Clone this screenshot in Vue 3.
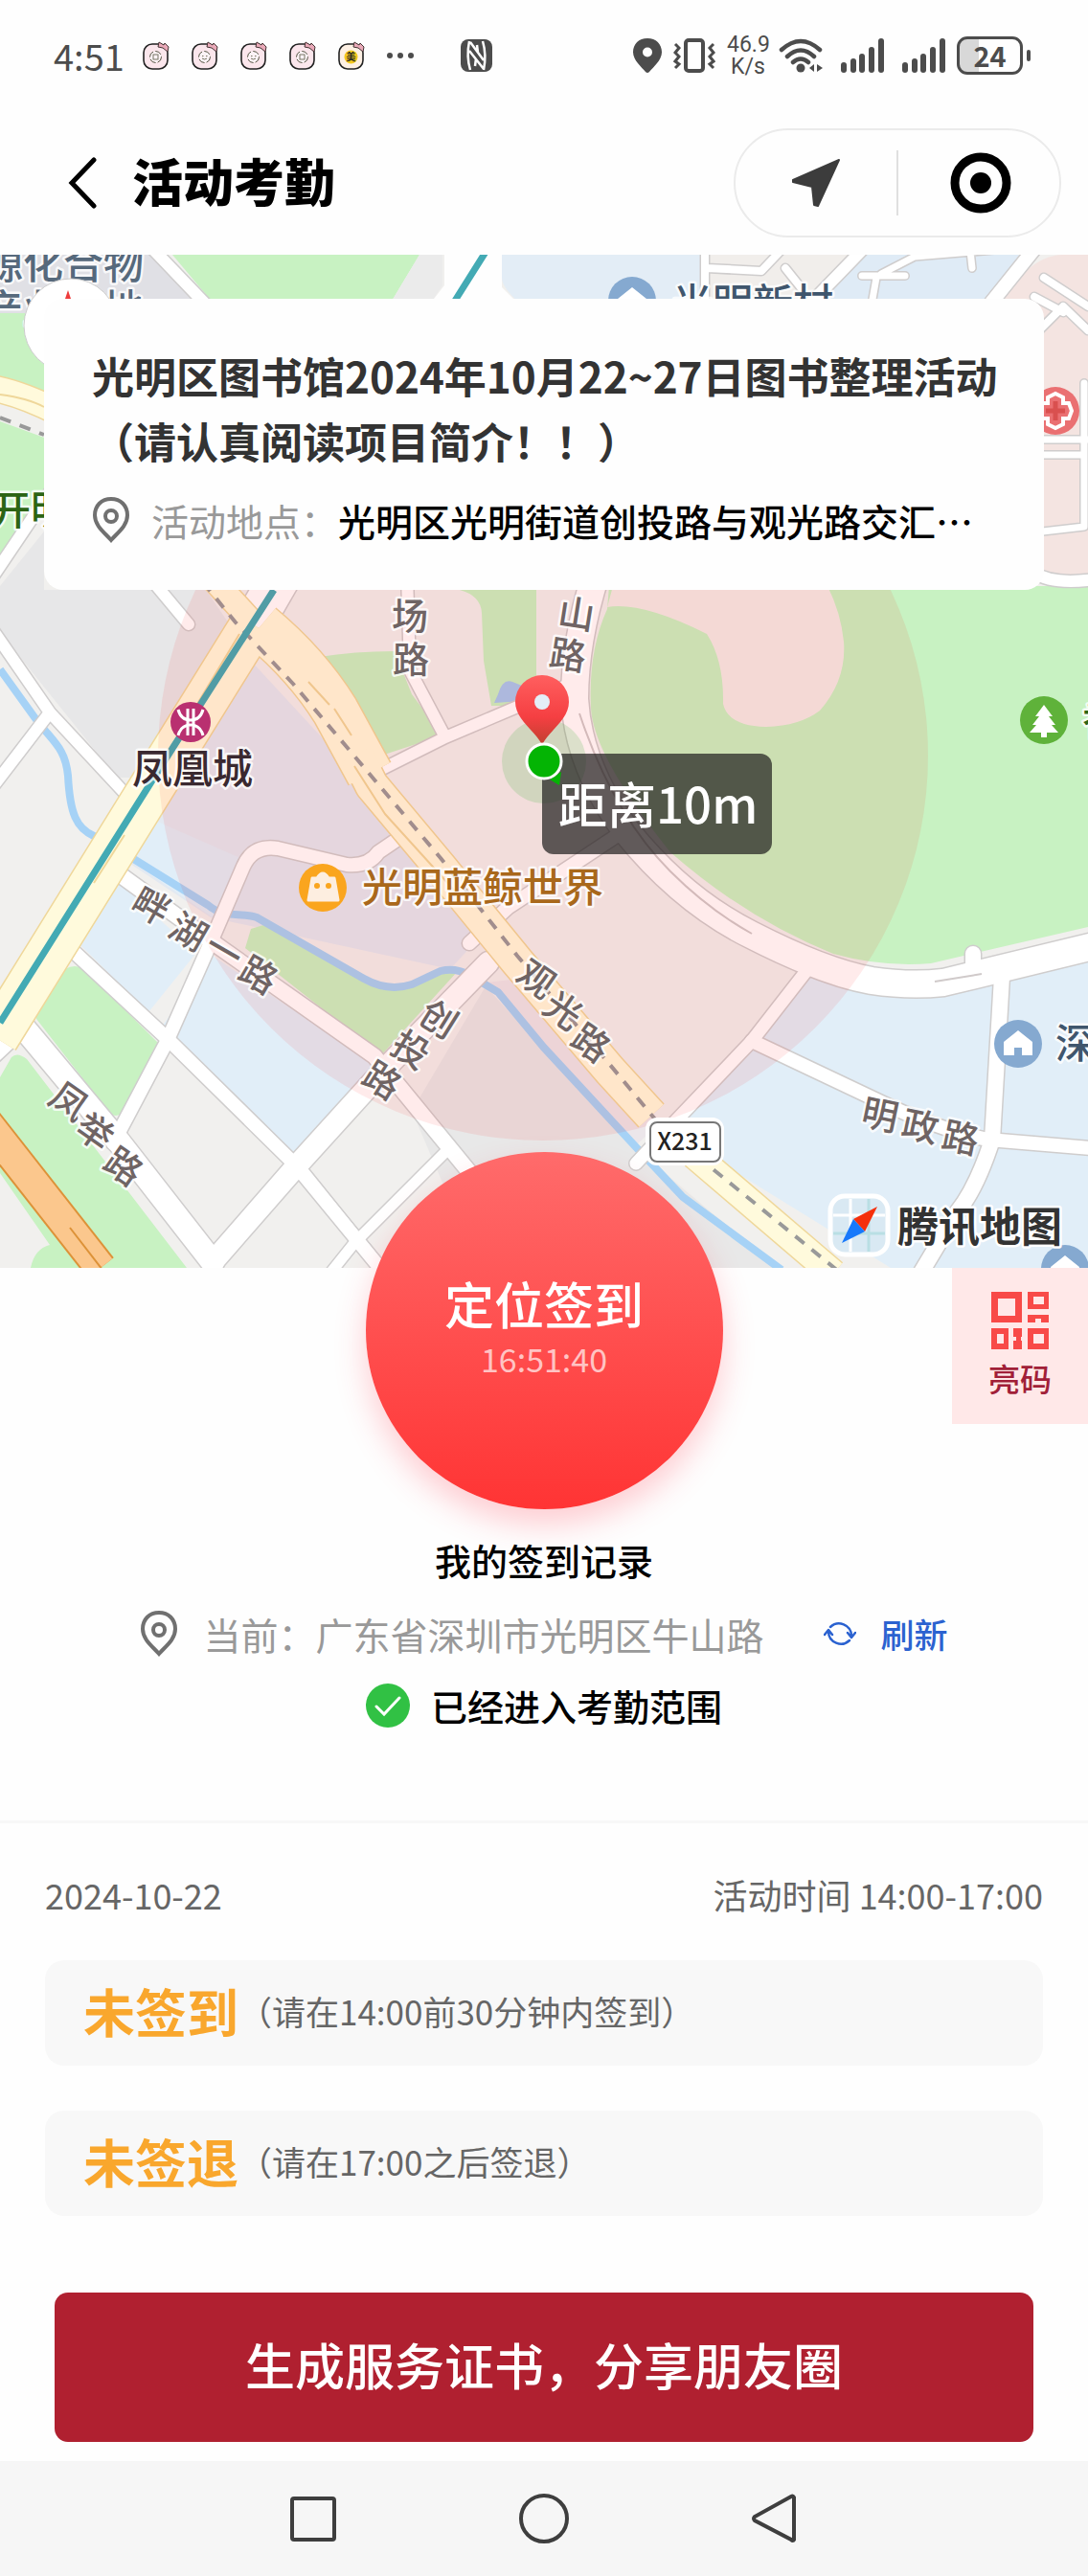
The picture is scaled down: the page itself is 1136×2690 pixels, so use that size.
<template>
  <div class="page">
    <div class="status-bar">
      <div class="status-left">
        <span class="clock">4:51</span>
        <svg v-for="(app, i) in notifications" :key="i" class="app-icon" viewBox="0 0 30 32">
          <rect x="2" y="4" width="25" height="26" rx="9" :fill="app === 'mei' ? '#fdf0e4' : '#fbe6ec'" stroke="#222" stroke-width="1.6" />
          <template v-if="app === 'mei'">
            <circle cx="14.500" cy="17.500" r="7" fill="#f3c81c" />
            <text x="14.500" y="21" font-size="10" font-weight="700" text-anchor="middle" fill="#222">美</text>
          </template>
          <template v-else>
            <circle cx="14.500" cy="17.500" r="6" fill="#fdf3f6" stroke="#554" stroke-width="1" stroke-dasharray="7 2" />
            <rect v-if="app === 'box'" x="12" y="15" width="5" height="5" fill="none" stroke="#776" />
            <path v-else d="M12 16.500h1.500M16 16.500h1.500M12 19q2.500 2 5 0" fill="none" stroke="#776" />
          </template>
          <path d="M18 2l5 3 1-2 4 4-1 5-5-4-5-1z" fill="#e9a9b8" stroke="#433" stroke-width="1" />
        </svg>
        <svg class="dots" viewBox="0 0 30 10">
          <circle cx="4" cy="5" r="3" /><circle cx="15" cy="5" r="3" /><circle cx="26" cy="5" r="3" />
        </svg>
        <svg class="nfc" viewBox="0 0 33 34">
          <rect width="33" height="34" rx="8" fill="#4c4c4c" />
          <path d="M9 2C7 12 7 22 10 32M23 2c3 10 3 20 1 30M10 3l14 19M9 12l15 19M16 20l-1 8M17 6l1 8" fill="none" stroke="#fff" stroke-width="2.500" />
        </svg>
      </div>
      <div class="status-right">
        <svg class="s-pin" viewBox="0 0 30 36">
          <path fill-rule="evenodd" d="M15 0C6 0 0 6 0 14.500 0 23 9 30 13 35q2 2 4 0c4-5 13-12 13-20.500C30 6 24 0 15 0zm0 9.500a5 5 0 1 1 0 10 5 5 0 0 1 0-10z" />
        </svg>
        <svg class="s-vib" viewBox="0 0 44 36" fill="none" stroke="#4c4c4c" stroke-width="4">
          <rect x="13" y="2" width="18" height="32" rx="3" />
          <path d="M2 6l4 4-4 5 4 4-4 5 4 3-4 4M42 6l-4 4 4 5-4 4 4 5-4 3 4 4" stroke-width="3" />
        </svg>
        <span class="speed">46.9<br>K/s</span>
        <svg class="s-wifi" viewBox="0 0 46 36" fill="none" stroke="#4c4c4c" stroke-width="4.500" stroke-linecap="round">
          <path d="M3 12q20-18 40 0M9 19q14-13 28 0M15 25q8-7 16 0" />
          <circle cx="23" cy="31" r="4.500" fill="#4c4c4c" stroke="none" />
          <path d="M37 27v8l-5-4zM40 27v8l6-4z" fill="#4c4c4c" stroke="none" />
        </svg>
        <svg v-for="n in 2" :key="n" class="s-signal" viewBox="0 0 45 36">
          <rect y="25" width="6" height="11" rx="3" />
          <rect x="10" y="21" width="6" height="15" rx="3" />
          <rect x="19" y="16" width="6" height="20" rx="3" />
          <rect x="29" y="9" width="6" height="27" rx="3" />
          <rect x="39" width="6" height="36" rx="3" />
        </svg>
        <span class="battery">24</span>
      </div>
    </div>

    <header class="nav">
      <button class="back" aria-label="返回">
        <svg viewBox="0 0 30 54"><path d="M27 3L4 27l23 24" fill="none" stroke="#000" stroke-width="5" stroke-linecap="round" /></svg>
      </button>
      <h1>活动考勤</h1>
      <div class="capsule">
        <button aria-label="位置">
          <svg class="send" viewBox="0 0 52 52"><path d="M50 2L28 50l-4-1-2-19-20-5v-2z" fill="#3c3c3c" stroke="#3c3c3c" stroke-width="2" stroke-linejoin="round" /></svg>
        </button>
        <button aria-label="关闭">
          <svg class="target" viewBox="0 0 64 64"><circle cx="32" cy="32" r="27" fill="none" stroke="#000" stroke-width="9" /><circle cx="32" cy="32" r="11" /></svg>
        </button>
      </div>
    </header>

    <section class="map">
      <svg class="map-canvas" viewBox="0 266 1136 1058">
        <rect y="266" width="1136" height="1058" fill="#f1f0ee" />

        <!-- land use -->
        <path v-for="(a, i) in areas" :key="'a' + i" :d="a.d" :fill="a.fill" />

        <!-- river -->
        <path d="M0 699L36 749C55 775 68 780 71 810C73 850 80 865 98 873L138 896L217 945C235 960 250 952 268 958L380 1022Q405 1036 430 1028L460 1014Q475 1010 490 1018L520 1036L568 1094L666 1200L713 1250L816 1326" fill="none" stroke="#a6d2f6" stroke-width="8" />

        <!-- streets: casing first, then the fill -->
        <g fill="none" stroke="#cfcdcd" stroke-linejoin="round" stroke-linecap="round">
          <path v-for="(r, i) in roads" :key="'c' + i" :d="r.d" :stroke-width="r.w + 3" />
        </g>
        <g fill="none" stroke="#fff" stroke-linejoin="round" stroke-linecap="round">
          <path v-for="(r, i) in roads" :key="'r' + i" :d="r.d" :stroke-width="r.w" />
        </g>
        <path d="M605 745Q640 850 700 910Q740 950 785 975M976 1025L1025 1017" fill="none" stroke="#d0caca" stroke-width="2" />

        <!-- main roads -->
        <g fill="none" stroke-linejoin="round">
          <path v-for="(r, i) in mainRoads" :key="'mc' + i" :d="r.d" stroke="#efd79a" :stroke-width="r.w + 3" />
          <path v-for="(r, i) in mainRoads" :key="'m' + i" :d="r.d" stroke="#fffadc" :stroke-width="r.w" />
          <path d="M250 662L200 745M130 872L98 922M0 412Q30 416 46 425M322 712L344 736M349 740L367 768M370 800L402 850L480 936" stroke="#efd79a" stroke-width="2" />
          <path d="M0 436L46 454M212 608L246 650L306 714L362 780L460 896L540 998L637 1112L690 1176L742 1219L876 1328" stroke="#999" stroke-width="4" stroke-dasharray="12 10" />
          <path d="M509 260L475 314M286 616L181 780L0 1068" stroke="#43aab4" stroke-width="7" />
          <path d="M-30 1152L105 1324" stroke="#dd9238" stroke-width="35" />
          <path d="M-30 1152L105 1324" stroke="#fbc78d" stroke-width="31" />
          <path d="M73 1282L107 1326" stroke="#dd9238" stroke-width="2" />
        </g>

        <!-- check-in radius -->
        <circle cx="567" cy="789" r="402" fill="#f00" fill-opacity="0.08" />

        <!-- places -->
        <g fill="none" stroke="#fff">
          <circle cx="199" cy="754" r="21" fill="#b93070" stroke="none" />
          <path d="M196 740v28M202 740v28M186 741q3 11 13 11 10 0 13-11M186 768q3-11 13-11 10 0 13 11" stroke-width="3" />
          <circle cx="337" cy="927" r="25" fill="#faa51e" stroke="none" />
          <path d="M326 917h23l4 23h-31zM331 917q6-10 12 0" fill="#fdeee0" stroke="#fdeee0" stroke-width="3" stroke-linejoin="round" />
          <circle cx="331" cy="925" r="3" fill="#faa51e" stroke="none" />
          <circle cx="343" cy="925" r="3" fill="#faa51e" stroke="none" />
          <circle cx="1090" cy="752" r="25" fill="#5fb23a" stroke="none" />
          <path d="M1090 736l9 12h-4l7 9h-4l7 8h-12v5h-6v-5h-12l7-8h-4l7-9h-4z" fill="#fff" stroke="none" />
          <circle cx="1102" cy="429" r="25" fill="#ea7072" stroke="none" />
          <path d="M1094 421v-6l8-4 8 4v6h6l3 8-3 8h-6v6l-8 4-8-4v-6h-6l-3-8 3-8z" stroke-width="4" />
          <path d="M1102 419v20M1092 429h20" stroke="#d9504f" stroke-width="5" />
        </g>
        <g v-for="h in houses" :key="h.x" :transform="`translate(${h.x} ${h.y})`">
          <circle r="25" fill="#85a9d0" />
          <path d="M0-14L15-2V12H4V4H-4v8H-15V-2z" fill="#fff" />
        </g>

        <g class="place">
          <text v-for="p in places" :key="p.text" :x="p.x" :y="p.y" :fill="p.fill" font-size="42">{{ p.text }}</text>
        </g>
        <g class="street" font-size="38" text-anchor="middle">
          <text v-for="(s, i) in streetChars" :key="i" :transform="`translate(${s.x} ${s.y}) rotate(${s.r})`" y="14">{{ s.c }}</text>
        </g>

        <rect x="678" y="1171" width="74" height="42" rx="8" fill="#fff" stroke="#fff" stroke-width="8" />
        <rect x="679" y="1172" width="73" height="41" rx="7" fill="#fff" stroke="#777" stroke-width="2" />
        <text x="715" y="1201" font-size="25" font-weight="500" text-anchor="middle" fill="#222">X231</text>

        <!-- map provider -->
        <rect x="867" y="1249" width="60" height="61" rx="15" fill="#d9e9f3" stroke="#fff" stroke-width="5" />
        <path d="M888 1252v55M870 1269h54" stroke="#fff" stroke-width="3" />
        <path d="M907 1252v55M870 1288h54" stroke="#b9dfe4" stroke-width="3" />
        <path d="M916 1260l-25 13 12 13z" fill="#f5300c" />
        <path d="M879 1298l12-25 12 13z" fill="#1779fb" />
        <text class="provider" x="937" y="1297" font-size="43">腾讯地图</text>

        <!-- compass -->
        <circle cx="74" cy="340" r="49" fill="#fff" stroke="#ccc" />
        <path d="M71 303l-8 24h16z" fill="#ee3d3d" />

        <!-- current position -->
        <circle cx="568" cy="795" r="44" fill="#3cb43c" fill-opacity="0.18" />
        <path d="M566 778C560 764 538 752 538 733a28 28 0 0 1 56 0C594 752 572 764 566 778z" fill="url(#pin)" />
        <circle cx="566" cy="733" r="8" fill="#e4eef6" />
        <rect x="566" y="787" width="240" height="105" rx="12" fill="#1e1c1c" fill-opacity="0.7" />
        <text x="583" y="860" font-size="51" font-weight="500" fill="#fff">距离10m</text>
        <path d="M574 814l12-8-2 14z" fill="#04b404" />
        <circle cx="568" cy="795" r="18" fill="#04b404" stroke="#fff" stroke-width="3" />
        <defs>
          <linearGradient id="pin" x2="0" y2="1">
            <stop offset="0" stop-color="#ff5f5f" />
            <stop offset="0.6" stop-color="#f53f42" />
            <stop offset="1" stop-color="#c04030" />
          </linearGradient>
        </defs>
      </svg>

      <div class="activity">
        <h2>光明区图书馆2024年10月22~27日图书整理活动（请认真阅读项目简介！！）</h2>
        <p class="address">
          <svg class="pin" viewBox="0 0 40 48"><path :d="pinPath" /><circle cx="20" cy="20" r="6" /></svg>
          <span class="label">活动地点：</span>
          <span class="value">光明区光明街道创投路与观光路交汇…</span>
        </p>
      </div>
    </section>

    <section class="checkin">
      <button class="checkin-btn">
        <span class="checkin-title">定位签到</span>
        <span class="checkin-time">16:51:40</span>
      </button>
      <button class="qr">
        <svg viewBox="0 0 60 60">
          <path fill-rule="evenodd" d="M0 0h32v32H0zM7 7v18h18V7zM38 0h22v18H38zM44 5v8h11V5zM0 38h18v22H0zM6 44v10h7V44zM38 38h22v22H38zM44 44v10h11V44zM38 24h8v8h-8zM52 24h8v8h-8zM46 24h6v4h-6zM23 38h9v9h-9zM23 51h9v9h-9zM26 47h5v4h-5z" />
        </svg>
        亮码
      </button>
      <a class="record" href="#">我的签到记录</a>
      <div class="current">
        <svg class="pin" viewBox="0 0 40 48"><path :d="pinPath" /><circle cx="20" cy="20" r="6" /></svg>
        <span class="place-name">当前：广东省深圳市光明区牛山路</span>
        <button class="refresh">
          <svg viewBox="0 0 34 30" fill="none" stroke="#2b62d0" stroke-width="2.500" stroke-linecap="round" stroke-linejoin="round">
            <path d="M7 8a13 13 0 0 1 22 9M27 22a13 13 0 0 1-22-9M1 16l4-5 4 5M25 14l4 5 4-5" />
          </svg>
          刷新
        </button>
      </div>
      <div class="range">
        <svg viewBox="0 0 46 46"><circle cx="23" cy="23" r="23" fill="#31c144" /><path d="M11 24l8 8 16-17" fill="none" stroke="#fff" stroke-width="3" stroke-linecap="round" /></svg>
        <span>已经进入考勤范围</span>
      </div>
    </section>

    <section class="schedule">
      <div class="schedule-head">
        <span>2024-10-22</span>
        <span>活动时间 14:00-17:00</span>
      </div>
      <div v-for="item in records" :key="item.state" class="record-item">
        <strong>{{ item.state }}</strong>
        <span>{{ item.tip }}</span>
      </div>
      <button class="share">生成服务证书，分享朋友圈</button>
    </section>

    <nav class="system-nav">
      <button aria-label="最近任务"><svg viewBox="0 0 52 52"><rect x="4" y="5" width="44" height="43" rx="2" /></svg></button>
      <button aria-label="主页"><svg viewBox="0 0 52 52"><circle cx="26" cy="26" r="24" /></svg></button>
      <button aria-label="后退"><svg viewBox="0 0 52 52"><path d="M46 4v44q-1 2-3 0L5 28q-2-2 0-4L43 3q2-1 3 1z" /></svg></button>
    </nav>
  </div>
</template>

<script setup>
const notifications = ['box', 'face', 'face', 'box', 'mei']

const pinPath = 'M20 2C10 2 3 9 3 19c0 11 10 18 17 26 7-8 17-15 17-26C37 9 30 2 20 2z'

const records = [
  { state: '未签到', tip: '（请在14:00前30分钟内签到）' },
  { state: '未签退', tip: '（请在17:00之后签退）' }
]

const green = '#c8f2c2'
const blue = '#e1eef8'

const areas = [
  { fill: '#e0e0e5', d: 'M0 266H158L225 330H0z' },
  { fill: green, d: 'M0 327H60V415L0 395zM0 440L60 462V500L0 590z' },
  { fill: '#e7e7e8', d: 'M46 555V616H215L245 660L150 812L122 812L0 660V612z' },
  { fill: green, d: 'M180 266H438L408 316H222z' },
  { fill: '#ebebeb', d: 'M438 266H462V298L450 316H408z' },
  { fill: '#fefefe', d: 'M464 266H524V300L540 316H450L464 298z' },
  { fill: '#e3edf6', d: 'M524 266H733V316H542Q524 300 524 290z' },
  { fill: '#f1eeeb', d: 'M736 266H900L860 316H736z' },
  { fill: '#dfebf6', d: 'M900 266H1064L1030 316H856z' },
  { fill: '#f4e4e1', d: 'M1028 316L1070 284Q1090 266 1110 266H1136V608H1080z' },
  { fill: '#e3e9f1', d: 'M262 690L133 900L220 958L470 1012L495 985L490 960L360 796z' },
  { fill: blue, d: 'M117 915L79 982L155 1057L205 995zM160 856L135 898L225 960L260 900zM222 998L169 1072L308 1206L400 1118z' },
  { fill: green, d: 'M262 970L256 990L398 1102L478 1014Q460 1012 420 1032Q400 1034 380 1022L275 966z' },
  { fill: green, d: 'M68 1012L38 1046V1064L115 1163Q123 1168 130 1160L171 1095L88 1012Q78 1006 68 1012z' },
  { fill: green, d: 'M0 1125L12 1104Q18 1098 28 1106L195 1324H32Q36 1304 52 1300L0 1225z' },
  { fill: green, d: 'M333 686Q370 680 412 680L430 725L462 768L395 790L372 745z' },
  { fill: green, d: 'M480 616Q502 622 503 640L505 690L513 737H528L560 722V616z' },
  { fill: '#ece6ea', d: 'M507 1026L560 1020L690 1172L664 1196z' },
  { fill: '#e8e8e8', d: 'M507 1030L664 1200L812 1324H500L430 1160z' },
  { fill: green, d: 'M634 636Q614 680 617 740Q620 790 700 890Q780 960 870 996Q920 1010 972 1006L1136 968V612H636z' },
  { fill: '#f4ece8', d: 'M640 612L634 634Q670 628 738 662Q756 690 755 735Q760 758 800 759Q835 758 856 742Q884 710 881 670Q878 640 864 612z' },
  { fill: blue, d: 'M712 1170L845 1020Q950 1060 1136 1000V1324H930L752 1214z' },
  { fill: '#a6c8f0', d: 'M520 725Q525 708 535 712L550 718L545 732L516 734z' }
]

const roads = [
  { w: 28, d: 'M622 600Q600 670 600 730Q604 800 654 868Q712 940 784 976Q860 1015 910 1024Q950 1030 985 1026L1150 986' },
  { w: 16, d: 'M100 895L232 991L391 1103L500 1236' },
  { w: 14, d: 'M60 978L174 1084L308 1216L400 1328' },
  { w: 22, d: 'M510 1005L399 1119L311 1216L222 1318' },
  { w: 24, d: 'M-10 1100L22 1070L123 1191L222 1318' },
  { w: 14, d: 'M118 1194L174 1088L217 991L254 905Q264 882 290 886L362 903Q385 905 395 890L420 873' },
  { w: 11, d: 'M467 1201L370 1298L346 1328M311 1216L398 1324' },
  { w: 12, d: 'M425 600L428 700L465 770M385 810L465 770L545 736L600 712' },
  { w: 14, d: 'M490 985L530 948L645 872' },
  { w: 13, d: 'M845 1010L785 1087L706 1170L664 1215' },
  { w: 14, d: 'M785 1087L918 1150Q980 1180 1032 1190L1150 1200' },
  { w: 16, d: 'M1046 1020L1036 1190Q1020 1240 1000 1265L955 1340M1016 996V1012' },
  { w: 12, d: 'M-6 600L58 505M-10 825L52 744M52 744L-6 660M52 744L130 828' },
  { w: 12, d: 'M150 250L215 318M162 610L197 652' },
  { w: 42, d: 'M294 600L268 645' },
  { w: 8, d: 'M736 260V318M738 280L795 283L815 262M820 280L836 300' },
  { w: 12, d: 'M905 256L845 318' },
  { w: 7, d: 'M900 288H945M915 290L910 318M920 286L955 268L1050 260M1013 262L1015 280' },
  { w: 14, d: 'M1080 260L1035 316' },
  { w: 8, d: 'M1080 350L1110 320L1136 345M1090 290L1136 320M1080 310L1110 326' },
  { w: 7, d: 'M1080 459H1136M1080 475H1130M1132 400V550L1080 556' },
  { w: 12, d: 'M1080 598Q1100 612 1150 604' }
]

const mainRoads = [
  { w: 26, d: 'M-10 405Q20 410 60 430' },
  { w: 24, d: 'M218 600L262 648' },
  { w: 46, d: 'M264 652L146 842L-4 1084' },
  { w: 48, d: 'M272 654Q320 694 350 742L386 808' },
  { w: 34, d: 'M372 788L388 820L460 906L540 1004L637 1118L680 1165' },
  { w: 28, d: 'M725 1206L870 1330' }
]

const houses = [
  { x: 660, y: 314 },
  { x: 1063, y: 1090 },
  { x: 1112, y: 1325 }
]

const places = [
  { text: '源化合物', x: -18, y: 291, fill: '#56697c' },
  { text: '产业基地', x: -18, y: 338, fill: '#56697c' },
  { text: '光明新村', x: 702, y: 332, fill: '#3f566d' },
  { text: '开明', x: -10, y: 548, fill: '#2c6414' },
  { text: '凤凰城', x: 138, y: 818, fill: '#3a2930' },
  { text: '光明蓝鲸世界', x: 378, y: 942, fill: '#a9681b' },
  { text: '深', x: 1102, y: 1105, fill: '#3f566d' },
  { text: '香', x: 1130, y: 768, fill: '#2c6414' }
]

// every character of a street name follows the street on its own
const streetChars = [
  { c: '场', x: 428, y: 643, r: 0 },
  { c: '路', x: 429, y: 688, r: 0 },
  { c: '山', x: 602, y: 641, r: 9 },
  { c: '路', x: 593, y: 684, r: 9 },
  { c: '畔', x: 158, y: 946, r: 30 },
  { c: '湖', x: 197, y: 973, r: 30 },
  { c: '一', x: 234, y: 993, r: 30 },
  { c: '路', x: 270, y: 1018, r: 30 },
  { c: '凤', x: 72, y: 1150, r: 35 },
  { c: '举', x: 99, y: 1182, r: 35 },
  { c: '路', x: 129, y: 1218, r: 35 },
  { c: '创', x: 458, y: 1064, r: 32 },
  { c: '投', x: 429, y: 1096, r: 32 },
  { c: '路', x: 399, y: 1128, r: 32 },
  { c: '观', x: 560, y: 1022, r: 35 },
  { c: '光', x: 588, y: 1055, r: 35 },
  { c: '路', x: 617, y: 1089, r: 35 },
  { c: '明', x: 919, y: 1164, r: 12 },
  { c: '政', x: 961, y: 1176, r: 12 },
  { c: '路', x: 1003, y: 1188, r: 12 }
]
</script>

<style>
body {
  background: #fefefe;
}
</style>

<style scoped>
.page {
  font-family: "Noto Sans CJK SC", sans-serif;
  color: #000;
  background: #fefefe;
}

button {
  border: 0;
  padding: 0;
  background: none;
  font-family: inherit;
  color: inherit;
  cursor: pointer;
}

svg {
  display: block;
  flex-shrink: 0;
}

h1,
h2,
p {
  margin: 0;
}

/* status bar */
.status-bar {
  display: flex;
  justify-content: space-between;
  align-items: center;
  height: 116px;
  padding: 0 68px 0 56px;
  color: #4c4c4c;
  fill: #4c4c4c;
}

.status-left,
.status-right {
  display: flex;
  align-items: center;
}

.clock {
  width: 92px;
  font-size: 38px;
  line-height: 40px;
}

.app-icon {
  width: 30px;
  height: 32px;
  margin-right: 21px;
}

.dots {
  width: 30px;
}

.nfc {
  width: 33px;
  margin-left: 48px;
}

.s-pin {
  width: 30px;
}

.s-vib {
  width: 44px;
  margin: 0 12px;
}

.speed {
  width: 44px;
  font: 23px/23px Roboto, sans-serif;
  text-align: center;
}

.s-wifi {
  width: 46px;
  margin: 0 0 0 10px;
}

.s-signal {
  width: 45px;
  margin-left: 19px;
}

.battery {
  position: relative;
  box-sizing: border-box;
  width: 69px;
  height: 40px;
  margin-left: 12px;
  border: 3px solid #4c4c4c;
  border-radius: 11px;
  background: linear-gradient(90deg, #d8d8d8 20px, #fefefe 20px);
  font-size: 29px;
  font-weight: 700;
  line-height: 32px;
  text-align: center;
}

.battery::after {
  content: "";
  position: absolute;
  top: 11px;
  right: -11px;
  width: 4px;
  height: 12px;
  border-radius: 2px;
  background: #4c4c4c;
}

/* header */
.nav {
  display: flex;
  align-items: center;
  height: 150px;
  padding: 0 28px 0 71px;
}

.back svg {
  width: 30px;
}

.nav h1 {
  flex: 1;
  margin-left: 37px;
  padding-bottom: 6px;
  font-size: 53px;
  font-weight: 900;
  line-height: 60px;
}

.capsule {
  display: flex;
  box-sizing: border-box;
  width: 342px;
  height: 114px;
  border: 2px solid #ebebeb;
  border-radius: 57px;
}

.capsule button {
  flex: 1;
  display: flex;
  align-items: center;
  justify-content: center;
}

.capsule button + button::before {
  content: "";
  width: 2px;
  height: 68px;
  margin-right: 54px;
  background: #e0e0e0;
}

.capsule button + button {
  padding-right: 50px;
  flex: 0 0 120px;
}

.send {
  width: 52px;
}

.target {
  width: 64px;
}

/* map */
.map {
  position: relative;
}

.map-canvas {
  width: 100%;
  height: auto;
}

.place,
.street,
.provider {
  font-weight: 500;
  stroke: #fff;
  stroke-width: 5px;
  stroke-linejoin: round;
  stroke-opacity: 0.8;
  paint-order: stroke;
}

.street {
  fill: #6f6464;
}

.provider {
  fill: #333;
  font-weight: 700;
  stroke-opacity: 1;
}

.activity {
  position: absolute;
  top: 46px;
  left: 46px;
  right: 46px;
  padding: 46px 40px 49px 50px;
  border-radius: 20px;
  background: #fefefe;
}

.activity h2 {
  font-size: 44px;
  line-height: 68px;
  font-weight: 700;
  color: #333;
}

.address {
  display: flex;
  align-items: center;
  height: 48px;
  margin-top: 25px;
  font-size: 39px;
  line-height: 48px;
  white-space: nowrap;
}

.pin {
  width: 40px;
  fill: none;
  stroke: #707070;
  stroke-width: 4px;
}

.label {
  margin-left: 22px;
  color: #999;
}

.value {
  font-weight: 500;
}

/* check-in */
.checkin {
  position: relative;
  display: flex;
  flex-direction: column;
  align-items: center;
  padding-bottom: 97px;
  border-bottom: 3px solid #f7f7f7;
}

.checkin-btn {
  position: relative;
  display: flex;
  flex-direction: column;
  align-items: center;
  width: 373px;
  height: 373px;
  margin-top: -121px;
  padding-top: 128px;
  border-radius: 50%;
  background: linear-gradient(#ff6b6b, #ff3434);
  box-shadow: 0 16px 32px rgba(255, 60, 80, 0.25);
  color: #fff;
}

.checkin-title {
  font-size: 52px;
  font-weight: 500;
  line-height: 60px;
}

.checkin-time {
  margin-top: 8px;
  font-size: 34px;
  line-height: 40px;
  color: #ffc4c4;
}

.qr {
  position: absolute;
  top: 0;
  right: 0;
  display: flex;
  flex-direction: column;
  align-items: center;
  gap: 10px;
  width: 142px;
  height: 163px;
  padding-top: 25px;
  background: #ffe8e8;
  font-size: 33px;
  font-weight: 500;
  line-height: 40px;
  color: #a11f38;
}

.qr svg {
  width: 60px;
  fill: #f84a48;
}

.record {
  margin-top: 33px;
  font-size: 38px;
  font-weight: 500;
  line-height: 40px;
  color: #000;
  text-decoration: none;
}

.current,
.range {
  display: flex;
  align-items: center;
  height: 46px;
  font-size: 39px;
  line-height: 46px;
}

.current {
  margin-top: 34px;
}

.place-name {
  margin: 0 62px 0 26px;
  color: #999;
}

.refresh {
  display: flex;
  align-items: center;
  gap: 26px;
  font-size: 35px;
  font-weight: 500;
  line-height: 46px;
  color: #2b62d0;
}

.refresh svg {
  width: 34px;
}

.range {
  gap: 22px;
  margin-top: 29px;
  font-size: 38px;
  font-weight: 500;
}

.range svg {
  width: 46px;
}

/* schedule */
.schedule {
  padding: 49px 47px 20px;
  color: #666;
}

.schedule-head {
  display: flex;
  justify-content: space-between;
  margin-bottom: 44px;
  font-size: 36px;
  line-height: 50px;
}

.record-item {
  display: flex;
  align-items: center;
  box-sizing: border-box;
  height: 110px;
  margin-bottom: 47px;
  padding: 0 0 6px 40px;
  border-radius: 20px;
  background: #f8f8f8;
  font-size: 35px;
}

.record-item strong {
  font-size: 54px;
  font-weight: 700;
  color: #f9a72d;
}

.share {
  display: block;
  width: calc(100% - 20px);
  height: 156px;
  margin: 80px 10px 0;
  padding-bottom: 8px;
  border-radius: 14px;
  background: #b02030;
  font-size: 52px;
  font-weight: 500;
  color: #fff;
}

.system-nav {
  display: flex;
  justify-content: center;
  align-items: center;
  gap: 189px;
  height: 120px;
  background: #f6f6f6;
}

.system-nav svg {
  width: 52px;
  fill: none;
  stroke: #3e3e3e;
  stroke-width: 4px;
}
</style>
